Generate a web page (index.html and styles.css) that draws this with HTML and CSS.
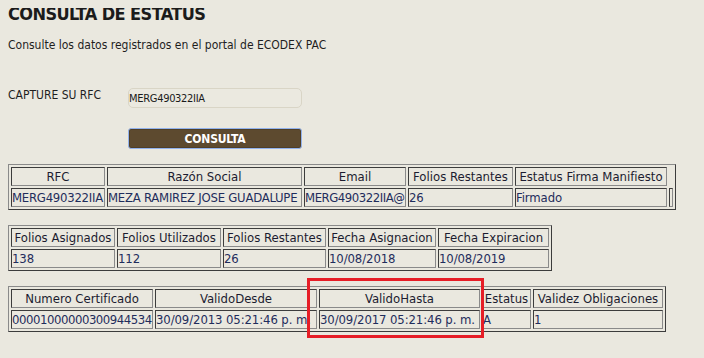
FILE: index.html
```html
<!DOCTYPE html>
<html lang="es">
<head>
<meta charset="utf-8">
<title>Consulta de Estatus</title>
<link rel="stylesheet" href="styles.css">
</head>
<body>
<h1 class="title">CONSULTA DE ESTATUS</h1>
<p class="intro">Consulte los datos registrados en el portal de ECODEX PAC</p>

<div class="form">
  <span class="form-label">CAPTURE SU RFC</span>
  <div class="rfc-input"><span class="rfc-value">MERG490322IIA</span></div>
  <div class="form-spacer"></div>
  <div class="btn"><span>CONSULTA</span></div>
</div>

<table class="grid t1">
  <colgroup>
    <col class="c94"><col class="c195"><col class="c102"><col class="c105"><col class="c152"><col class="c4">
  </colgroup>
  <tr>
    <th>RFC</th><th>Razón Social</th><th>Email</th><th>Folios Restantes</th><th>Estatus Firma Manifiesto</th>
  </tr>
  <tr>
    <td class="snug">MERG490322IIA</td><td class="snug">MEZA RAMIREZ JOSE GUADALUPE</td><td class="tight">MERG490322IIA@</td><td>26</td><td>Firmado</td><td class="empty"></td>
  </tr>
</table>

<table class="grid t2">
  <colgroup>
    <col class="c104"><col class="c104"><col class="c103"><col class="c108"><col class="c111">
  </colgroup>
  <tr>
    <th>Folios Asignados</th><th>Folios Utilizados</th><th>Folios Restantes</th><th>Fecha Asignacion</th><th>Fecha Expiracion</th>
  </tr>
  <tr>
    <td>138</td><td>112</td><td>26</td><td>10/08/2018</td><td>10/08/2019</td>
  </tr>
</table>

<table class="grid t3">
  <colgroup>
    <col class="c142"><col class="c162"><col class="c161"><col class="c49"><col class="c130">
  </colgroup>
  <tr>
    <th>Numero Certificado</th><th>ValidoDesde</th><th>ValidoHasta</th><th>Estatus</th><th>Validez Obligaciones</th>
  </tr>
  <tr>
    <td class="tight">00001000000300944534</td><td>30/09/2013 05:21:46 p. m.</td><td>30/09/2017 05:21:46 p. m.</td><td>A</td><td>1</td>
  </tr>
</table>

<div class="highlight"></div>
</body>
</html>
```

FILE: styles.css
```css
html, body {
  margin: 0;
  padding: 0;
}
body {
  margin: 8px;
  background: #eae8df;
  font-family: "DejaVu Sans Condensed", "DejaVu Sans", sans-serif;
  color: #1a1a1a;
}

.title {
  margin: -3px 0 0 0;
  font-size: 18px;
  line-height: 18px;
  font-weight: bold;
  letter-spacing: -0.6px;
  color: #1b1b1b;
}

.intro {
  margin: 15px 0 0 0;
  font-size: 12px;
  line-height: 14px;
  color: #1e1e1e;
}

.form {
  display: grid;
  grid-template-columns: 120px 174px;
  row-gap: 20px;
  margin-top: 36px;
}
.form-label {
  font-size: 12px;
  line-height: 14px;
  padding-top: 0;
  color: #1e1e1e;
}
.rfc-input {
  box-sizing: border-box;
  height: 20px;
  border: 1px solid #d9d5c6;
  border-radius: 5px;
  background: #ebe9e0;
  display: flex;
  align-items: center;
  padding-left: 0;
}
.rfc-value {
  font-size: 11px;
  color: #1a1a1a;
  letter-spacing: -0.3px;
}
.btn {
  box-sizing: border-box;
  height: 21px;
  border: 1px solid #92b2ec;
  border-radius: 3px;
  background: #5d4a2f;
  box-shadow: inset 0 0 0 1px #503f27;
  display: flex;
  align-items: center;
  justify-content: center;
}
.btn span {
  color: #ffffff;
  font-weight: bold;
  font-size: 12px;
  letter-spacing: -0.2px;
}

.grid {
  box-sizing: border-box;
  table-layout: fixed;
  border-collapse: separate;
  border-spacing: 2px;
  border: 1px solid;
  border-color: #8a8a8a #3c3c3c #3c3c3c #8a8a8a;
  margin-top: 15px;
}
.t1 { width: 668px; }
.t2 { width: 544px; }
.t3 { width: 658px; }

.grid th, .grid td {
  box-sizing: border-box;
  border: 1px solid;
  border-color: #3c3c3c #8a8a8a #8a8a8a #3c3c3c;
  height: 19px;
  line-height: 15px;
  white-space: nowrap;
}
.grid th {
  padding: 1px;
  font-weight: normal;
  font-size: 13px;
  text-align: center;
  color: #1c1c30;
  overflow: hidden;
}
.grid td {
  padding: 1px 0 1px 0;
  font-size: 13px;
  letter-spacing: -0.1px;
  text-align: left;
  color: #1f2d5c;
  overflow: visible;
}
.grid td.snug {
  letter-spacing: -0.25px;
}
.grid td.tight {
  letter-spacing: -0.45px;
}
.grid td.empty {
  padding: 0;
}

.c4 { width: 4px; }
.c49 { width: 49px; }
.c94 { width: 94px; }
.c102 { width: 102px; }
.c103 { width: 103px; }
.c104 { width: 104px; }
.c105 { width: 105px; }
.c108 { width: 108px; }
.c111 { width: 111px; }
.c130 { width: 130px; }
.c142 { width: 142px; }
.c152 { width: 152px; }
.c161 { width: 161px; }
.c162 { width: 162px; }
.c195 { width: 195px; }

.highlight {
  position: absolute;
  left: 307px;
  top: 278px;
  width: 177px;
  height: 60px;
  box-sizing: border-box;
  border: 3px solid #e61e27;
}
```
